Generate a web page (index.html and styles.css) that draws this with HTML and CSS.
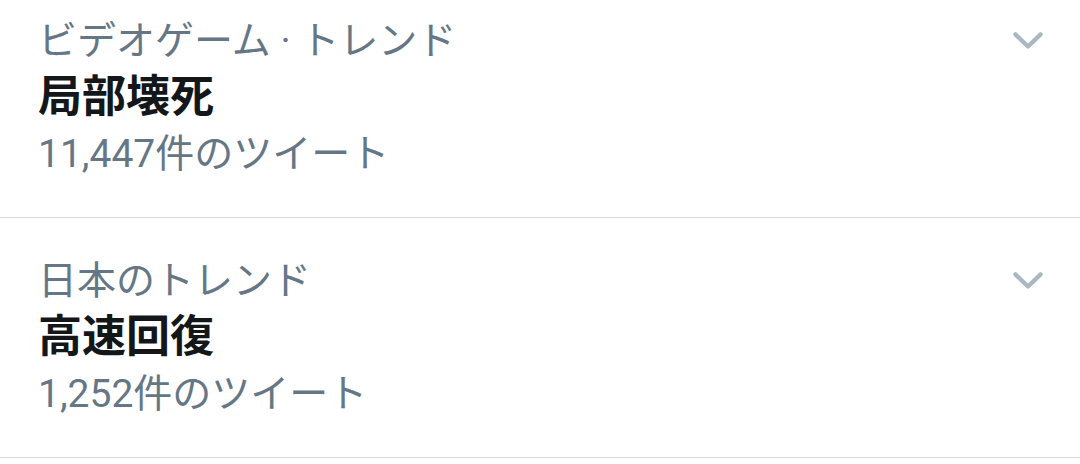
FILE: index.html
```html
<!DOCTYPE html>
<html lang="ja">
<head>
  <meta charset="UTF-8">
  <meta name="viewport" content="width=device-width, initial-scale=1.0">
  <title>トレンド</title>
  <link rel="stylesheet" href="styles.css">
</head>
<body>
  <div class="trend-list">
    <div class="trend">
      <div class="trend-text">
        <div class="trend-context">ビデオゲーム · トレンド</div>
        <div class="trend-name">局部壊死</div>
        <div class="trend-count">11,447件のツイート</div>
      </div>
      <div class="trend-menu">
        <svg width="30" height="20" viewBox="0 0 30 20"><polyline points="2.5,3.5 15,15.5 27.5,3.5"/></svg>
      </div>
    </div>

    <div class="trend">
      <div class="trend-text">
        <div class="trend-context">日本のトレンド</div>
        <div class="trend-name">高速回復</div>
        <div class="trend-count">1,252件のツイート</div>
      </div>
      <div class="trend-menu">
        <svg width="30" height="20" viewBox="0 0 30 20"><polyline points="2.5,3.5 15,15.5 27.5,3.5"/></svg>
      </div>
    </div>
  </div>
</body>
</html>
```

FILE: styles.css
```css
body {
  margin: 0;
  background: #fff;
  font-family: Roboto, "Noto Sans CJK JP", sans-serif;
  overflow: hidden;
}

/* list is scrolled a little, first row is cut at the top */
.trend-list {
  margin-top: -22px;
}

.trend {
  display: flex;
  justify-content: space-between;
  align-items: flex-start;
  padding: 35px 37px 35px 38px;
  border-bottom: 1px solid #d4dade;
}

.trend-context,
.trend-count {
  font-size: 39px;
  line-height: 56px;
  color: #657786;
}

.trend-name {
  font-size: 44px;
  line-height: 57px;
  font-weight: 700;
  color: #14171a;
}

.trend-menu {
  height: 56px;
  display: flex;
  align-items: center;
}

.trend-menu svg {
  display: block;
  fill: none;
  stroke: #aab8c2;
  stroke-width: 4.5;
  stroke-linecap: round;
  stroke-linejoin: round;
}
```
